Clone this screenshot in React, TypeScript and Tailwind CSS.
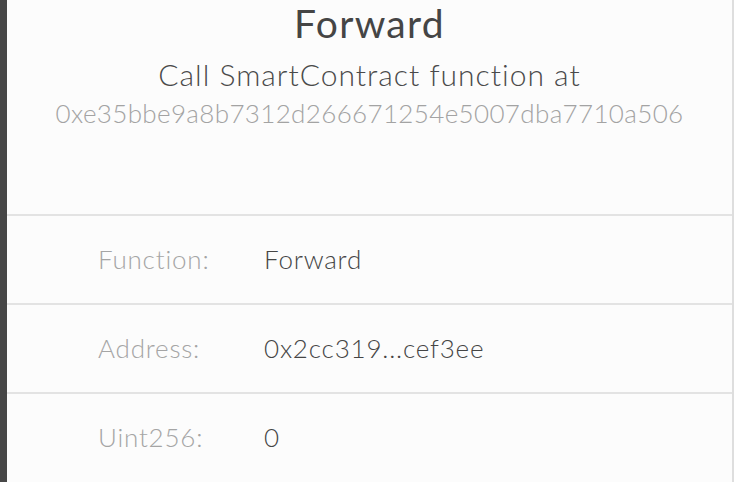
import React from "react";

const rows = [
  { label: "Function:", value: "Forward" },
  { label: "Address:", value: "0x2cc319...cef3ee" },
  { label: "Uint256:", value: "0" },
];

export default function App() {
  return (
    <div
      className="flex h-[482px] w-[735px] overflow-hidden bg-white"
      style={{ fontFamily: "Lato, 'Noto Sans', sans-serif" }}
    >
      <div className="w-[7px] shrink-0 bg-[#474747]" />
      <div className="flex flex-1 flex-col border-r-2 border-[#dedede] bg-[#fcfcfc]">
        {/* header */}
        <div className="flex h-[214px] flex-col items-center text-center">
          <h1 className="text-[39px] leading-[1.2] tracking-[1.3px] text-[#454545]">Forward</h1>
          <p className="mt-[9px] text-[30px] font-light leading-[1.2] tracking-[1px] text-[#4a4a4a]">
            Call SmartContract function at
          </p>
          <p className="mt-[6px] text-[26px] font-light leading-[1.2] tracking-[0.35px] text-[#a3a3a3]">
            0xe35bbe9a8b7312d266671254e5007dba7710a506
          </p>
        </div>

        {rows.map((r) => (
          <div
            key={r.label}
            className="flex h-[89px] items-center border-t-2 border-[#e3e3e3] pl-[91px] text-[26px] tracking-[0.8px]"
          >
            <span className="w-[166px] font-light text-[#a5a5a5]">{r.label}</span>
            <span className="font-light text-[#454545]">{r.value}</span>
          </div>
        ))}
      </div>
      <div className="w-px shrink-0" />
    </div>
  );
}
